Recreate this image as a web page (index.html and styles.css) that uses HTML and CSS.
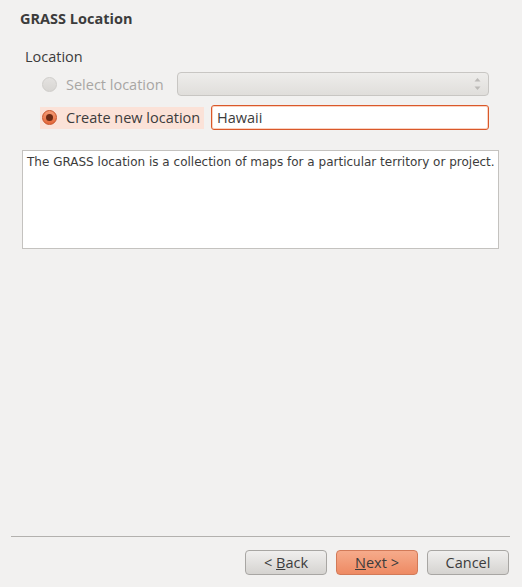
FILE: index.html
```html
<!DOCTYPE html>
<html>
<head>
<meta charset="utf-8">
<link rel="stylesheet" href="styles.css">
</head>
<body>
<div class="dialog">
  <div class="title">GRASS Location</div>
  <div class="group">
    <div class="group-label">Location</div>
    <div class="row row-select">
      <div class="opt disabled">
        <span class="radio radio-off"></span>
        <span class="opt-label">Select location</span>
      </div>
      <div class="combo"><span class="spin"><svg width="7" height="16" viewBox="0 0 7 16"><path d="M3.5 2 L6.5 5.5 L0.5 5.5 Z" fill="#bcbab7"/><path d="M3.5 14 L6.5 10.5 L0.5 10.5 Z" fill="#bcbab7"/></svg></span></div>
    </div>
    <div class="row row-create">
      <div class="opt active">
        <span class="radio radio-on"><span class="dot"></span></span>
        <span class="opt-label">Create new location</span>
      </div>
      <div class="entry">Hawaii</div>
    </div>
  </div>
  <div class="info">The GRASS location is a collection of maps for a particular territory or project.</div>
  <div class="spacer"></div>
  <div class="sep"></div>
  <div class="buttons">
    <button class="btn">&lt; <u>B</u>ack</button>
    <button class="btn btn-next"><u>N</u>ext &gt;</button>
    <button class="btn">Cancel</button>
  </div>
</div>
</body>
</html>
```
FILE: styles.css
```css
html, body {
  margin: 0;
  padding: 0;
  background: #f2f1f0;
}
.dialog {
  width: 522px;
  height: 587px;
  box-sizing: border-box;
  display: flex;
  flex-direction: column;
  font-family: "Open Sans", "DejaVu Sans", sans-serif;
  color: #3c3c3c;
}
.title {
  font-weight: bold;
  font-size: 14.5px;
  line-height: 18px;
  padding: 10px 0 0 20px;
  height: 20px;
}
.group {
  padding: 0 33px 0 25px;
  margin-top: 18px;
}
.group-label {
  font-size: 14.5px;
  line-height: 18px;
  height: 18px;
}
.row {
  display: flex;
  align-items: center;
}
.row-select {
  margin-top: 6px;
  height: 24px;
}
.row-create {
  margin-top: 9px;
  height: 25px;
}
.opt {
  display: flex;
  align-items: center;
  margin-left: 15px;
  height: 22px;
  box-sizing: border-box;
  padding-left: 2px;
  font-size: 14.5px;
}
.disabled {
  color: #a8a6a4;
  width: 137px;
}
.active {
  background: #fbe2d8;
  width: 164px;
}
.radio {
  width: 15px;
  height: 15px;
  border-radius: 50%;
  box-sizing: border-box;
  display: inline-flex;
  align-items: center;
  justify-content: center;
  margin-right: 9px;
}
.radio-off {
  background: linear-gradient(#e4e2e0, #d8d6d3);
  border: 1px solid #cfcdca;
}
.radio-on {
  background: linear-gradient(#f49a74, #e4683a);
  border: 1px solid #c7532a;
}
.dot {
  width: 7px;
  height: 7px;
  border-radius: 50%;
  background: #6b2a14;
}
.combo {
  margin-left: 0;
  flex: 1;
  height: 24px;
  box-sizing: border-box;
  border: 1px solid #c8c6c3;
  border-radius: 4px;
  background: linear-gradient(#eeedeb, #e0dedb);
  display: flex;
  justify-content: flex-end;
  align-items: center;
  padding-right: 7px;
}
.spin svg { display: block; }
.entry {
  margin-left: 7px;
  flex: 1;
  height: 25px;
  box-sizing: border-box;
  border: 1px solid #d9582a;
  border-radius: 3px;
  background: #ffffff;
  box-shadow: inset 0 0 0 1px #fbd2c0;
  padding: 0 0 0 5px;
  font-size: 14.5px;
  line-height: 23px;
  color: #3c3c3c;
}
.info {
  margin: 20px 23px 0 22px;
  height: 99px;
  box-sizing: border-box;
  border: 1px solid #c4c2bf;
  background: #ffffff;
  font-family: "DejaVu Sans", sans-serif;
  font-size: 12px;
  line-height: 16px;
  padding: 3px 0 0 4px;
  color: #3c3c3c;
  white-space: nowrap;
}
.spacer { flex: 1; }
.sep {
  margin: 0 12px 0 11px;
  height: 1px;
  background: #b3b1ae;
}
.buttons {
  display: flex;
  justify-content: flex-end;
  gap: 9px;
  padding: 13px 13px 12px 0;
}
.btn {
  width: 82px;
  height: 25px;
  box-sizing: border-box;
  border: 1px solid #a8a6a3;
  border-radius: 4px;
  background: linear-gradient(#f0efee, #d5d3d0);
  font-family: "Open Sans", "DejaVu Sans", sans-serif;
  font-size: 14.5px;
  color: #3c3c3c;
  padding: 0;
  margin: 0;
  line-height: 22px;
}
.btn-next {
  background: linear-gradient(#f6ab8b, #ee8a63);
  border-color: #d27a58;
}
```
